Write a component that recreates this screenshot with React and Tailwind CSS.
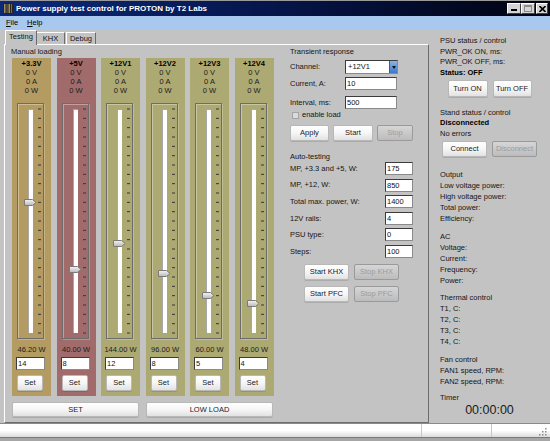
import React from 'react';

const channels = [
  { name: '+3.3V', watts: '46.20 W', value: 14, max: 24, bg: 'bg-[#b39b62]' },
  { name: '+5V', watts: '40.00 W', value: 8, max: 28, bg: 'bg-[#a26b6b]' },
  { name: '+12V1', watts: '144.00 W', value: 12, max: 30, bg: 'bg-[#ada972]' },
  { name: '+12V2', watts: '96.00 W', value: 8, max: 30, bg: 'bg-[#ada972]' },
  { name: '+12V3', watts: '60.00 W', value: 5, max: 30, bg: 'bg-[#ada972]' },
  { name: '+12V4', watts: '48.00 W', value: 4, max: 30, bg: 'bg-[#ada972]' },
];

const autoRows = [
  ['MP, +3.3 and +5, W:', '175'],
  ['MP, +12, W:', '850'],
  ['Total max. power, W:', '1400'],
  ['12V rails:', '4'],
  ['PSU type:', '0'],
  ['Steps:', '100'],
];

const ticks = Array.from({ length: 25 }, (_, i) => i);

// button looks
const btn = 'flex items-center justify-center bg-linear-to-b from-white via-[#f6f6f6] to-[#e2e2e2] border border-[#b8b8b8] rounded-[2px] shadow-[0_1px_0_rgba(0,0,0,0.12)] text-[#1a1a1a]';
const btnOff = 'flex items-center justify-center bg-linear-to-b from-[#d6d6d6] to-[#bcbcbc] border border-[#9a9a9a] rounded-[2px] text-[#9c9c9c]';
const input = 'bg-white border border-[#3c3c3c] border-r-[#8a8a8a] border-b-[#8a8a8a] pl-[1px] leading-[11px] text-[#111]';

function Slider({ value, max }) {
  const off = 224 - (value / max) * 224;
  return (
    <div className="relative ml-[5px] mt-[8px] w-[27px] h-[236px] border border-[#6c6c6c] shadow-[inset_1px_1px_0_rgba(255,255,255,0.35),1px_1px_0_rgba(255,255,255,0.25)] flex items-start pt-[5px] pl-[10px]">
      <div className="w-[5px] h-[224px] bg-white border-l border-t border-[#a8a8a8]" />
      <svg className="ml-[5px] overflow-visible" width="3" height="224">
        {ticks.map(i => (
          <rect key={i} x="0" y={i * 224 / 24 - 0.5} width="3" height="1" fill="#353535" />
        ))}
      </svg>
      <svg className="absolute left-[6px]" style={{ top: off + 1.5 }} width="13" height="7" viewBox="0 0 13 7">
        <defs>
          <linearGradient id="thumbg" x1="0" y1="0" x2="0" y2="1">
            <stop offset="0" stopColor="#f4f4f4" />
            <stop offset="1" stopColor="#b8b8b8" />
          </linearGradient>
        </defs>
        <path d="M0.5 0.5 H8.5 L12 3.5 L8.5 6.5 H0.5 Z" fill="url(#thumbg)" stroke="#7a7a7a" strokeWidth="1" />
      </svg>
    </div>
  );
}

function Channel({ ch }) {
  return (
    <div className={`${ch.bg} h-[338px] flex flex-col pt-[1px] text-[#1c1c1c]`}>
      <div className="leading-[9px] text-center font-bold text-black">{ch.name}</div>
      <div className="leading-[9px] text-center">0 V</div>
      <div className="leading-[9px] text-center">0 A</div>
      <div className="leading-[9px] text-center">0 W</div>
      <Slider value={ch.value} max={ch.max} />
      <div className="mt-[6px] leading-[10px] text-center">{ch.watts}</div>
      <div className={`ml-[4px] mt-[2px] w-[29px] h-[13px] ${input}`}>{ch.value}</div>
      <div className={`ml-[5px] mt-[5px] w-[26px] h-[16px] ${btn}`}>Set</div>
    </div>
  );
}

function Line({ children, bold, h = 'leading-[11px] h-[11px]' }) {
  return <div className={`${h} whitespace-nowrap ${bold ? 'font-bold text-black' : ''}`}>{children}</div>;
}

export default function App() {
  return (
    <div className="w-[550px] h-[441px] bg-[#c3c3c3] flex flex-col overflow-hidden text-[7.5px] text-[#151515] font-['Liberation_Sans',Arial,sans-serif]">
      {/* title bar */}
      <div className="h-[16px] flex items-center border-t border-[#9a9a9a] bg-linear-to-r from-[#0c2a7a] via-[#06154a] to-[#010410]">
        <svg className="ml-[3px]" width="11" height="11" viewBox="0 0 11 11">
          <rect width="11" height="11" fill="#2a241a" />
          <rect x="1" y="1" width="1.5" height="9" fill="#a08d5c" />
          <rect x="3.5" y="1" width="1" height="9" fill="#6e6a60" />
          <rect x="5.5" y="1" width="1.5" height="9" fill="#a08d5c" />
          <rect x="8" y="1" width="1" height="9" fill="#6e6a60" />
        </svg>
        <span className="ml-[2px] text-[8px] font-bold text-white whitespace-nowrap">Power supply test control for PROTON by T2 Labs</span>
        <div className="ml-auto mr-[2px] flex items-center">
          <div className="w-[14px] h-[11px] bg-[#d4d4d4] border border-t-white border-l-white border-r-[#404040] border-b-[#404040] flex items-end justify-center pb-[2px]">
            <div className="w-[6px] h-[2px] bg-black mr-[1px]" />
          </div>
          <div className="w-[14px] h-[11px] bg-[#d4d4d4] border border-t-white border-l-white border-r-[#404040] border-b-[#404040] flex items-center justify-center">
            <div className="w-[8px] h-[7px] border border-[#8c8c8c] border-t-2" />
          </div>
          <div className="ml-[1px] w-[12px] h-[11px] bg-[#d4d4d4] border border-t-white border-l-white border-r-[#404040] border-b-[#404040] flex items-center justify-center">
            <svg width="7" height="6" viewBox="0 0 7 6">
              <path d="M0.5 0 L6.5 6 M6.5 0 L0.5 6" stroke="#000" strokeWidth="1.6" />
            </svg>
          </div>
        </div>
      </div>

      {/* menu */}
      <div className="h-[13px] bg-[#a9c8ef] flex items-center pl-[6px] text-black">
        <span><span className="underline">F</span>ile</span>
        <span className="ml-[9px]"><span className="underline">H</span>elp</span>
      </div>

      <div className="flex h-[394px]">
        {/* tab control */}
        <div className="w-[429px] pl-[4px] flex flex-col">
          <div className="flex items-end h-[15px] pl-[1px]">
            <div className="relative z-10 -mb-[1px] h-[15px] w-[32px] pb-[2px] flex items-center justify-center bg-[#c3c3c3] border-t border-l border-r border-t-white border-l-white border-r-[#6c6c6c]">Testing</div>
            <div className="h-[12px] w-[28px] flex items-center justify-center border-t border-r border-t-white border-r-[#6c6c6c]">KHX</div>
            <div className="ml-[1px] h-[12px] w-[30px] flex items-center justify-center border-t border-l border-r border-t-white border-l-white border-r-[#6c6c6c]">Debug</div>
          </div>
          <div className="flex-1 flex border border-t-white border-l-white border-r-[#6c6c6c] border-b-[#6c6c6c]">
            {/* manual loading */}
            <div className="w-[285px] pl-[7px] pt-[1px] flex flex-col">
              <div className="h-[11px] leading-[11px] -ml-[1px]">Manual loading</div>
              <div className="mt-[1px] grid grid-cols-[repeat(6,39px)] gap-x-[5.5px]">
                {channels.map(ch => <Channel key={ch.name} ch={ch} />)}
              </div>
              <div className="mt-[6px] flex gap-[7px]">
                <div className={`w-[127px] h-[15px] ${btn}`}>SET</div>
                <div className={`w-[127px] h-[15px] ${btn}`}>LOW LOAD</div>
              </div>
            </div>

            {/* transient / auto */}
            <div className="w-[130px] pt-[2px] flex flex-col">
              <div className="leading-[10px]">Transient response</div>
              <div className="mt-[3px] h-[14px] flex items-center">
                <span className="w-[55px]">Channel:</span>
                <div className="w-[53px] h-[14px] flex bg-white border border-[#3c3c3c] border-r-[#8a8a8a] border-b-[#8a8a8a]">
                  <span className="flex-1 pl-[2px] leading-[12px]">+12V1</span>
                  <div className="w-[8px] h-[12px] bg-linear-to-b from-[#8ab4ea] to-[#3f78c8] border-l border-[#2f5ea8] flex items-center justify-center">
                    <svg width="4" height="3" viewBox="0 0 4 3"><path d="M0 0 H4 L2 3 Z" fill="#111" /></svg>
                  </div>
                </div>
              </div>
              <div className="mt-[3px] h-[13px] flex items-center">
                <span className="w-[55px]">Current, A:</span>
                <div className={`w-[52px] h-[13px] ${input}`}>10</div>
              </div>
              <div className="mt-[6px] h-[13px] flex items-center">
                <span className="w-[55px]">Interval, ms:</span>
                <div className={`w-[52px] h-[13px] ${input}`}>500</div>
              </div>
              <div className="mt-[1px] h-[10px] flex items-center">
                <div className="ml-[2px] w-[7px] h-[7px] bg-[#dadada] border border-[#a4a4a4]" />
                <span className="ml-[3px]">enable load</span>
              </div>
              <div className="mt-[5px] flex gap-[4px]">
                <div className={`w-[39px] h-[16px] ${btn}`}>Apply</div>
                <div className={`w-[40px] h-[16px] ${btn}`}>Start</div>
                <div className={`w-[36px] h-[16px] ${btnOff}`}>Stop</div>
              </div>
              <div className="mt-[11px] leading-[10px]">Auto-testing</div>
              <div className="flex flex-col gap-[3.6px]">
                {autoRows.map(([label, val]) => (
                  <div key={label} className="h-[13px] flex items-center">
                    <span className="w-[95px] whitespace-nowrap">{label}</span>
                    <div className={`w-[28px] h-[13px] ${input}`}>{val}</div>
                  </div>
                ))}
              </div>
              <div className="mt-[6px] pl-[14px] flex gap-[5px]">
                <div className={`w-[45px] h-[16px] ${btn}`}>Start KHX</div>
                <div className={`w-[45px] h-[16px] ${btnOff}`}>Stop KHX</div>
              </div>
              <div className="mt-[6px] pl-[14px] flex gap-[5px]">
                <div className={`w-[45px] h-[16px] ${btn}`}>Start PFC</div>
                <div className={`w-[45px] h-[16px] ${btnOff}`}>Stop PFC</div>
              </div>
            </div>
          </div>
        </div>

        {/* status side */}
        <div className="flex-1 pl-[11px] pt-[7px] flex flex-col">
          <Line h="leading-[10.5px] h-[10.5px]">PSU status / control</Line>
          <Line h="leading-[10.5px] h-[10.5px]">PWR_OK ON, ms:</Line>
          <Line h="leading-[10.5px] h-[10.5px]">PWR_OK OFF, ms:</Line>
          <Line h="leading-[10.5px] h-[10.5px]" bold>Status: OFF</Line>
          <div className="mt-[2px] -ml-[11px] flex justify-center gap-[5px]">
            <div className={`w-[40px] h-[17px] ${btn}`}>Turn ON</div>
            <div className={`w-[39px] h-[17px] ${btn}`}>Turn OFF</div>
          </div>
          <div className="mt-[10.5px]">
            <Line h="leading-[10.5px] h-[10.5px]">Stand status / control</Line>
            <Line h="leading-[10.5px] h-[10.5px]" bold>Disconnected</Line>
            <Line h="leading-[10.5px] h-[10.5px]">No errors</Line>
          </div>
          <div className="mt-[2px] -ml-[11px] flex justify-center gap-[5px]">
            <div className={`w-[45px] h-[16px] ${btn}`}>Connect</div>
            <div className={`w-[45px] h-[16px] ${btnOff}`}>Disconnect</div>
          </div>
          <div className="mt-[11.5px]">
            <Line>Output</Line>
            <Line>Low voltage power:</Line>
            <Line>High voltage power:</Line>
            <Line>Total power:</Line>
            <Line>Efficiency:</Line>
          </div>
          <div className="mt-[7px]">
            <Line>AC</Line>
            <Line>Voltage:</Line>
            <Line>Current:</Line>
            <Line>Frequency:</Line>
            <Line>Power:</Line>
          </div>
          <div className="mt-[6px]">
            <Line>Thermal control</Line>
            <Line>T1, C:</Line>
            <Line>T2, C:</Line>
            <Line>T3, C:</Line>
            <Line>T4, C:</Line>
          </div>
          <div className="mt-[7px]">
            <Line>Fan control</Line>
            <Line>FAN1 speed, RPM:</Line>
            <Line>FAN2 speed, RPM:</Line>
          </div>
          <div className="mt-[5px]">
            <Line>Timer</Line>
          </div>
          <div className="mt-[1.5px] -ml-[11px] text-center text-[12.5px] leading-[12px] text-[#1a1a1a]">00:00:00</div>
        </div>
      </div>

      {/* status bar */}
      <div className="h-[18px] flex flex-col">
        <div className="h-[14px] flex border-t border-[#8a8a8a] bg-linear-to-b from-white via-white to-[#dcdcdc] pl-[3px]">
          <div className="w-[419px] border-r border-[#c8c8c8]" />
          <div className="w-[70px] border-r border-[#c8c8c8]" />
          <div className="flex-1 flex items-end justify-end pr-[3px] pb-[1px]">
            <svg width="9" height="9" viewBox="0 0 9 9">
              {[[7, 1], [7, 4], [4, 4], [7, 7], [4, 7], [1, 7]].map(([x, y]) => (
                <rect key={`${x}-${y}`} x={x} y={y} width="1.5" height="1.5" fill="#8a8a8a" />
              ))}
            </svg>
          </div>
        </div>
        <div className="flex-1 bg-[#a6a6a6] border-t border-[#7a7a7a]" />
      </div>
    </div>
  );
}
